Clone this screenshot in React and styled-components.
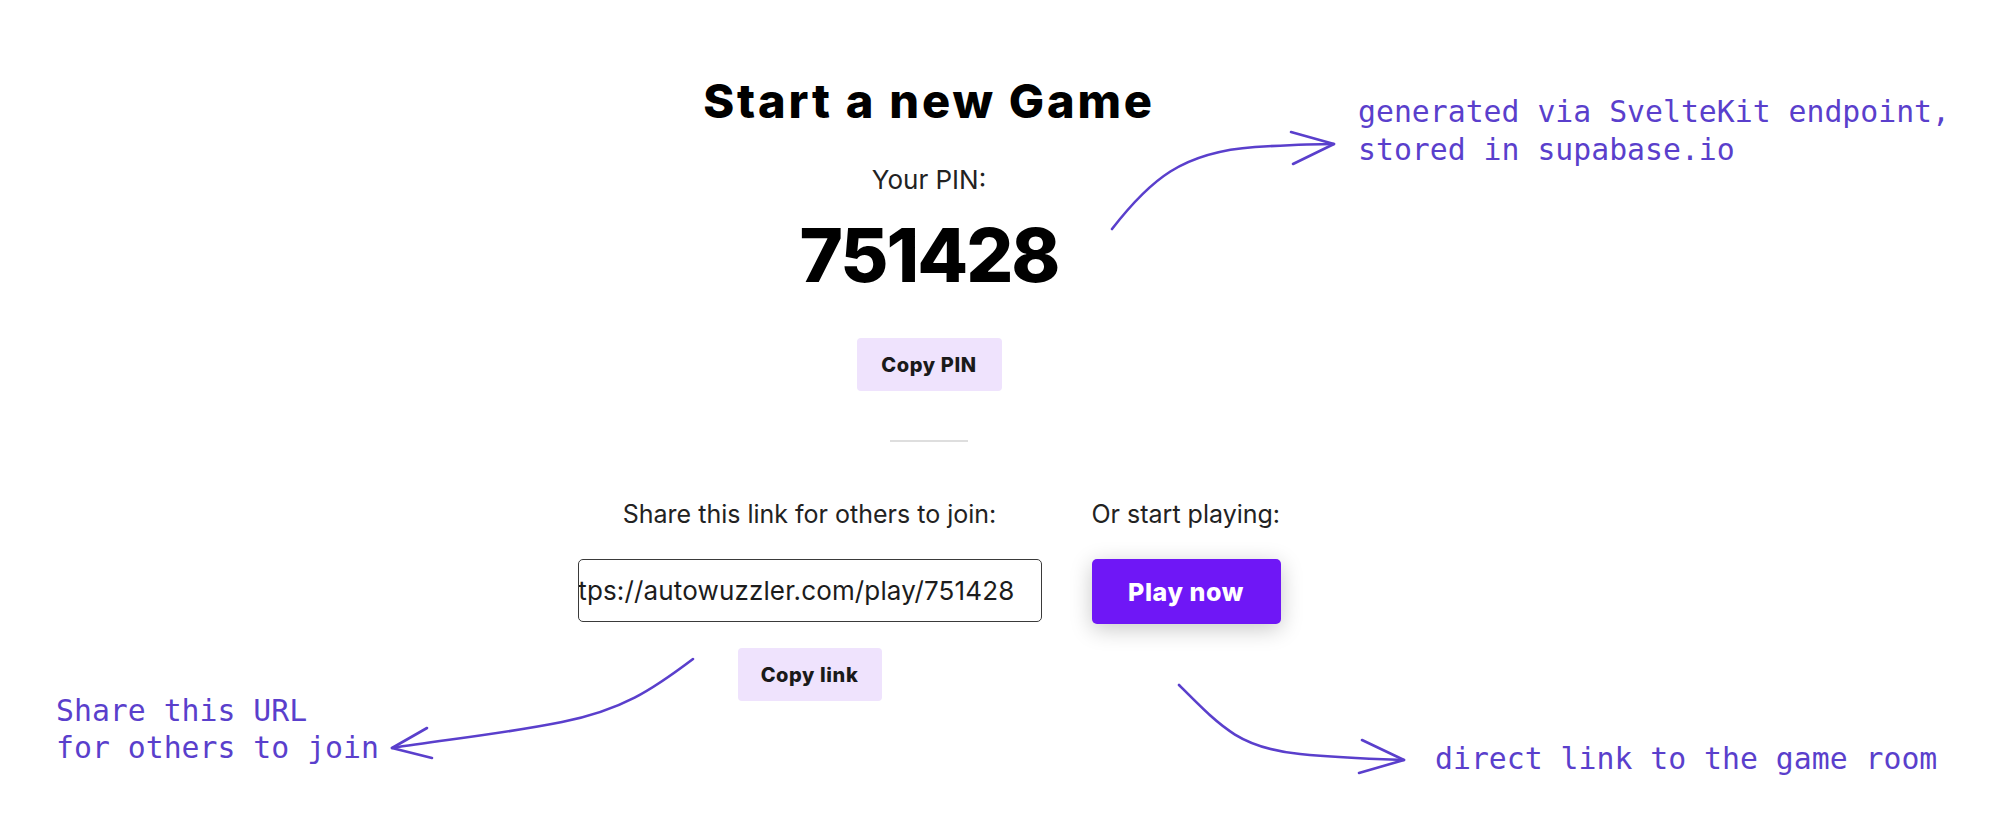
import React from "react";
import styled, { createGlobalStyle } from "styled-components";

const GlobalStyle = createGlobalStyle`
  html, body {
    margin: 0;
    padding: 0;
    background: #ffffff;
  }
  body {
    font-family: Inter, "Noto Sans", "Liberation Sans", sans-serif;
    color: #1c1c1c;
  }
`;

const ink = "#5a3fcc";

const Page = styled.div`
  position: relative;
  width: 1999px;
  height: 832px;
  overflow: hidden;
  background: #fff;
`;

const Main = styled.main`
  display: flex;
  flex-direction: column;
  align-items: center;
  padding-top: 73px;
  padding-right: 141px;
`;

const Title = styled.h1`
  margin: 0;
  font-size: 47px;
  line-height: 56px;
  font-weight: 800;
  color: #000;
  letter-spacing: 2.8px;
`;

const Label = styled.p`
  margin: ${(p) => p.$mt || 0}px 0 0;
  font-size: ${(p) => p.$size || 25}px;
  line-height: ${(p) => p.$lh || 30}px;
  font-weight: 400;
  color: #222;
  white-space: nowrap;
`;

const Pin = styled.div`
  margin-top: 19px;
  font-size: 74px;
  line-height: 80px;
  font-weight: 800;
  color: #000;
  letter-spacing: -2px;
`;

const SoftButton = styled.button`
  margin-top: ${(p) => p.$mt || 0}px;
  width: ${(p) => p.$w}px;
  height: 53px;
  border: none;
  border-radius: 4px;
  background: #efe3fd;
  color: #1a1a1a;
  font-family: inherit;
  font-size: 20px;
  font-weight: 800;
  letter-spacing: 0.6px;
  cursor: pointer;
`;

const Divider = styled.hr`
  margin: 49px 0 0;
  width: 78px;
  height: 2px;
  border: none;
  background: #dedede;
`;

const Row = styled.div`
  display: flex;
  align-items: flex-start;
  gap: 50px;
  margin-top: 57px;
`;

const Column = styled.div`
  display: flex;
  flex-direction: column;
  align-items: ${(p) => (p.$center ? "center" : "flex-start")};
  width: ${(p) => p.$w}px;
`;

const UrlField = styled.div`
  margin-top: 30px;
  box-sizing: border-box;
  width: 464px;
  height: 63px;
  display: flex;
  align-items: center;
  justify-content: flex-end;
  padding: 0 26px 0 24px;
  border: 1.5px solid #3a3a3a;
  border-radius: 5px;
  overflow: hidden;
  white-space: nowrap;
  font-size: 26px;
  letter-spacing: 0.15px;
  color: #1c1c1c;
`;

const PlayButton = styled.button`
  margin-top: 30px;
  width: 189px;
  height: 65px;
  border: none;
  border-radius: 5px;
  background: #6f17f6;
  color: #fff;
  font-family: inherit;
  font-size: 25px;
  font-weight: 800;
  letter-spacing: 0.6px;
  box-shadow: 0 5px 22px rgba(0, 0, 0, 0.22);
  cursor: pointer;
`;

const Note = styled.div`
  position: absolute;
  left: ${(p) => p.$x}px;
  top: ${(p) => p.$y}px;
  font-family: "DejaVu Sans Mono", "Liberation Mono", monospace;
  font-size: 29.8px;
  line-height: ${(p) => p.$lh || 38}px;
  color: ${ink};
  white-space: pre;
`;

const Arrows = styled.svg`
  position: absolute;
  inset: 0;
  pointer-events: none;
`;

export default function App() {
  return (
    <Page>
      <GlobalStyle />
      <Main>
        <Title>Start a new Game</Title>
        <Label $size={26} $lh={32} $mt={35}>
          Your PIN:
        </Label>
        <Pin>751428</Pin>
        <SoftButton $w={145} $mt={43}>
          Copy PIN
        </SoftButton>
        <Divider />
        <Row>
          <Column $center $w={464}>
            <Label>Share this link for others to join:</Label>
            <UrlField role="textbox" aria-readonly="true">
              https://autowuzzler.com/play/751428
            </UrlField>
            <SoftButton $w={144} $mt={26}>
              Copy link
            </SoftButton>
          </Column>
          <Column $w={189}>
            <Label>Or start playing:</Label>
            <PlayButton>Play now</PlayButton>
          </Column>
        </Row>
      </Main>

      <Note $x={1358} $y={93}>
        {"generated via SvelteKit endpoint,\nstored in supabase.io"}
      </Note>
      <Note $x={56} $y={692} $lh={37}>
        {"Share this URL\nfor others to join"}
      </Note>
      <Note $x={1435} $y={740}>
        direct link to the game room
      </Note>

      <Arrows width="1999" height="832" viewBox="0 0 1999 832">
        <g fill="none" stroke={ink} strokeWidth="2.6" strokeLinecap="round" strokeLinejoin="round">
          <path d="M1112 229 C1150 180 1182 152 1255 147 C1290 145 1315 144 1334 144" />
          <path d="M1291 132 L1334 144 L1293 164" />
          <path d="M693 659 C652 690 622 710 562 722 C502 734 442 740 392 748" />
          <path d="M427 728 L392 748 L432 758" />
          <path d="M1179 685 C1222 728 1240 748 1300 754 C1340 758 1375 759 1404 760" />
          <path d="M1362 740 L1404 760 L1359 773" />
        </g>
      </Arrows>
    </Page>
  );
}
